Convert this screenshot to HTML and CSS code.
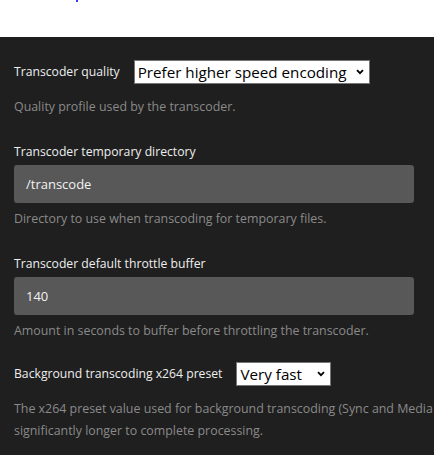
FILE: index.html
```html
<!DOCTYPE html>
<html>
	<head>
		<meta charset="UTF-8">
		<title>Transcoder</title>
		<link rel="stylesheet" href="styles.css">
	</head>
	<body>
		<div class="top">
			<span class="dot"></span>
		</div>
		<div class="panel">
			<div class="setting">
				<div class="row">
					<label class="label" for="quality">Transcoder quality</label>
					<span class="select-wrap">
						<select id="quality" class="select select-wide">
							<option>Prefer higher speed encoding</option>
						</select>
						<svg class="chev" width="8" height="6" viewBox="0 0 8 6"><path d="M1 1.2 L4 4.2 L7 1.2" fill="none" stroke="#000" stroke-width="1.8"/></svg>
					</span>
				</div>
				<p class="desc">Quality profile used by the transcoder.</p>
			</div>
			<div class="setting">
				<label class="label block" for="tmpdir">Transcoder temporary directory</label>
				<input id="tmpdir" class="field" type="text" value="/transcode">
				<p class="desc desc-field">Directory to use when transcoding for temporary files.</p>
			</div>
			<div class="setting">
				<label class="label block" for="buffer">Transcoder default throttle buffer</label>
				<input id="buffer" class="field" type="text" value="140">
				<p class="desc desc-field">Amount in seconds to buffer before throttling the transcoder.</p>
			</div>
			<div class="setting last">
				<div class="row">
					<label class="label" for="preset">Background transcoding x264 preset</label>
					<span class="select-wrap">
						<select id="preset" class="select select-small">
							<option>Very fast</option>
						</select>
						<svg class="chev" width="8" height="6" viewBox="0 0 8 6"><path d="M1 1.2 L4 4.2 L7 1.2" fill="none" stroke="#000" stroke-width="1.8"/></svg>
					</span>
				</div>
				<p class="desc">The x264 preset value used for background transcoding (Sync and Media Optimizer). Slower values will result in better video quality and smaller file sizes, but take<br>significantly longer to complete processing.</p>
			</div>
		</div>
	</body>
</html>
```
FILE: styles.css
```css
*{
	margin:0px;
	padding:0px;
	box-sizing:border-box;
}
html,body{
	width:434px;
	height:455px;
	overflow:hidden;
}
body{
	background:#1f1f1f;
	font-family:"Open Sans","Noto Sans",sans-serif;
}
.top{
	height:37px;
	background:#fff;
}
.dot{
	display:block;
	width:2px;
	height:2px;
	margin-left:76px;
	background:#3a3aff;
}
.panel{
	padding:23px 20px 20px 14px;
	display:flex;
	flex-direction:column;
	gap:22px;
}
.last{
	margin-top:-2px;
}
.row{
	display:flex;
	align-items:center;
	gap:14px;
	height:24px;
}
.label{
	color:#eeeeee;
	font-size:12.2px;
	line-height:20px;
	white-space:nowrap;
}
.block{
	display:block;
	padding-top:2px;
	margin-bottom:3px;
}
.select-wrap{
	position:relative;
	display:inline-block;
}
.select{
	appearance:none;
	-webkit-appearance:none;
	display:block;
	height:24px;
	background:#fff;
	border:1px solid #767676;
	border-radius:0;
	color:#000;
	font-family:"Open Sans","Noto Sans",sans-serif;
	font-size:15.2px;
	padding:0 0 1px 3px;
	outline:none;
}
.select-wide{width:236px;}
.select-small{width:95px;}
.chev{
	position:absolute;
	right:6px;
	top:9px;
}
.field{
	display:block;
	width:100%;
	height:38px;
	background:#585858;
	border:none;
	border-radius:3px;
	color:#f2f2f2;
	font-family:"Open Sans","Noto Sans",sans-serif;
	font-size:13px;
	padding:0 12px;
	outline:none;
}
.desc{
	margin-top:12px;
	color:#8a8a8a;
	font-size:12.4px;
	line-height:22px;
	white-space:nowrap;
}
.desc-field{
	margin-top:5px;
}
```
